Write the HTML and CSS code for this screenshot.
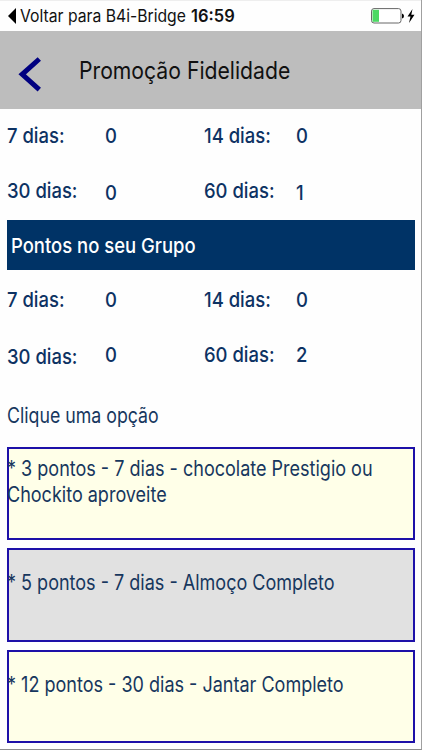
FILE: index.html
```html
<!DOCTYPE html>
<html lang="pt">
<head>
    <meta charset="UTF-8">
    <meta name="viewport" content="width=device-width, initial-scale=1.0">
    <title>Promoção Fidelidade</title>
    <link rel="stylesheet" href="styles.css">
</head>
<body>
    <div class="screen">
        <div class="status">
            <svg class="back-app" width="8" height="16" viewBox="0 0 8 16"><path d="M8 0v16L0 8z"/></svg>
            <span class="status-app"><span class="text">Voltar para B4i-Bridge</span></span>
            <span class="status-time"><span class="text">16:59</span></span>
            <svg class="battery" width="44" height="16" viewBox="0 0 44 16">
                <rect x="0.5" y="0.6" width="29.5" height="14.4" rx="2.5" fill="#fff" stroke="#666"/>
                <rect x="1.5" y="1.8" width="6.5" height="12" fill="#4cd964"/>
                <path d="M31 5.5q2 .5 2 2.5t-2 2.5z"/>
                <path d="M41.5 1L36.5 8.6h3L38 15l5.5-8.3h-3.2z"/>
            </svg>
        </div>
        <header>
            <svg class="back" width="24" height="36" viewBox="0 0 24 36"><path d="M22.3 3L5.2 18.3l17.1 15.3" fill="none" stroke="#000080" stroke-width="5"/></svg>
            <h1><span class="text">Promoção Fidelidade</span></h1>
        </header>
        <main>
            <div class="points">
                <span class="text">7 dias:</span>
                <span class="text">0</span>
                <span class="text">14 dias:</span>
                <span class="text">0</span>
                <span class="text">30 dias:</span>
                <span class="text lower">0</span>
                <span class="text">60 dias:</span>
                <span class="text lower">1</span>
            </div>
            <h2><span class="text">Pontos no seu Grupo</span></h2>
            <div class="points">
                <span class="text">7 dias:</span>
                <span class="text">0</span>
                <span class="text">14 dias:</span>
                <span class="text">0</span>
                <span class="text lower">30 dias:</span>
                <span class="text">0</span>
                <span class="text">60 dias:</span>
                <span class="text">2</span>
            </div>
            <p class="hint"><span class="text">Clique uma opção</span></p>
            <div class="options">
                <div class="option two-lines"><span class="text">* 3 pontos - 7 dias - chocolate Prestigio ou<br>Chockito aproveite</span></div>
                <div class="option selected"><span class="text">* 5 pontos - 7 dias - Almoço Completo</span></div>
                <div class="option"><span class="text">* 12 pontos - 30 dias - Jantar Completo</span></div>
            </div>
        </main>
    </div>
</body>
</html>
```
FILE: styles.css
```css
* {
    box-sizing: border-box;
}
body {
    font-family: Inter, Roboto, sans-serif;
    margin: 0;
    background-color: #fff;
    color: #17375e;
}
svg {
    display: block;
    flex: none;
}
.screen {
    height: 750px;
    overflow: hidden;
    border-right: 1px solid #a0a0a0;
    border-bottom: 1px solid #8c8c8c;
    background-color: #fefefe;
}
/* condensed lettering */
.text {
    display: inline-block;
    white-space: nowrap;
    transform: scaleX(0.858);
    transform-origin: left center;
}
.status {
    display: flex;
    align-items: center;
    height: 31px;
    padding-left: 8px;
    color: #111;
    font-size: 17px;
    line-height: 31px;
    border-top: 1px solid #eee;
}
.status-app {
    width: 171px;
    margin-left: 4px;
}
.status-app .text {
    transform: scaleX(0.925);
}
.status-time {
    width: 60px;
    font-weight: 600;
}
.status-time .text {
    transform: scaleX(0.97);
}
.battery {
    margin-left: auto;
    margin-right: 6px;
}
header {
    display: flex;
    align-items: center;
    height: 78px;
    padding-left: 17px;
    background-color: #bdbdbd;
    color: #111;
}
.back {
    margin-top: 8px;
}
h1 {
    margin: 0 0 0 38px;
    font-size: 24px;
    font-weight: 400;
}
h1 .text {
    transform: scaleX(0.882);
}
main {
    padding: 0 6px 0 7px;
}
.points {
    display: grid;
    grid-template-columns: 98px 99px 92px 1fr;
    grid-auto-rows: 55px;
    font-size: 20.5px;
    font-weight: 500;
    line-height: 54px;
    color: #0d3263;
}
.points .text,
h2 .text {
    transform: scaleX(0.9);
}
.lower {
    padding-top: 2px;
}
h2 {
    height: 50px;
    margin: 1px 0 3px;
    padding-left: 4px;
    background-color: #003366;
    color: #fff;
    font-size: 20.5px;
    font-weight: 500;
    line-height: 51px;
}
.hint {
    height: 64px;
    margin: 0;
    font-size: 21px;
    line-height: 65px;
}
.hint .text {
    transform: scaleX(0.845);
}
.options {
    display: grid;
    grid-template-columns: 100%;
    gap: 8px;
}
.option {
    height: 93.4px;
    border: 2px solid #1d10a8;
    background-color: #ffffe8;
    font-size: 21px;
    line-height: 26px;
    padding-top: 20px;
}
.option .text {
    margin-left: -2px;
}
.two-lines {
    padding-top: 7px;
}
.selected {
    background-color: #e1e1e1;
}
```
